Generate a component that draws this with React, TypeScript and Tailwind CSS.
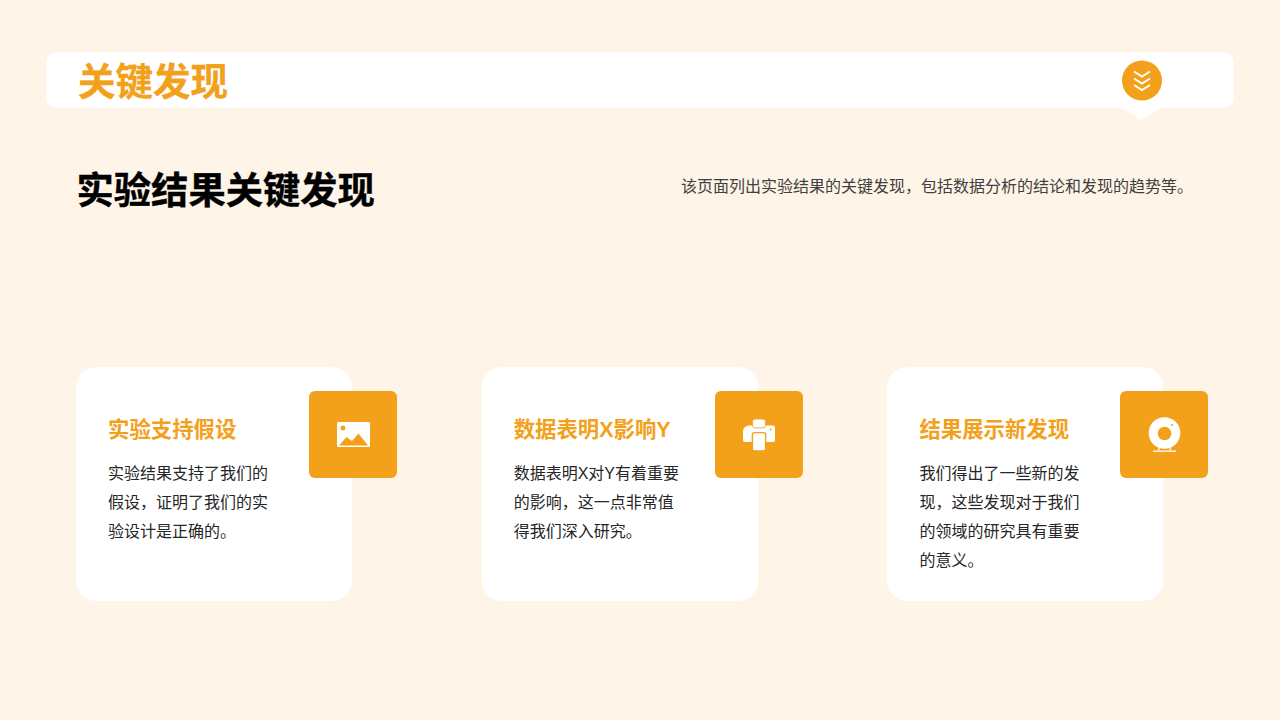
const font = '[font-family:"Liberation_Sans","Noto_Sans_CJK_SC",sans-serif]';

function ImageIcon() {
  return (
    <svg width="33" height="25" viewBox="0 0 33 25">
      <rect width="33" height="25" rx="1.5" fill="#fff" />
      <circle cx="6" cy="6" r="2.4" fill="#f3a01b" />
      <path d="M2 23.5 L9.5 15 L15 19 L21.5 11.5 L31 23.5 Z" fill="#f3a01b" />
    </svg>
  );
}

function PrinterIcon() {
  return (
    <svg width="32" height="32" viewBox="0 0 32 32">
      <path d="M6 6.5H30A2 2 0 0 1 32 8.5V21A2 2 0 0 1 30 23H2A2 2 0 0 1 0 21V12A6 6 0 0 1 6 6.5Z" fill="#fff" />
      <rect x="9.5" y="0" width="13" height="8.8" rx="2.5" fill="#fff" stroke="#f3a01b" strokeWidth="0.8" />
      <rect x="9.4" y="13.6" width="13.2" height="18.4" rx="2" fill="#fff" stroke="#f3a01b" strokeWidth="1.4" />
      <circle cx="27.5" cy="10.5" r="1" fill="#f3a01b" />
    </svg>
  );
}

function WebcamIcon() {
  return (
    <svg width="33" height="36" viewBox="0 0 33 36">
      <circle cx="16.5" cy="16" r="15.8" fill="#fff" />
      <circle cx="16.5" cy="16.5" r="6.8" fill="#f3a01b" />
      <circle cx="24" cy="8" r="1" fill="#f3a01b" />
      <path d="M11 30V33H9.5M22 30V33H23.5" stroke="#fff" strokeWidth="1.2" fill="none" />
      <rect x="5" y="33.5" width="23" height="1.3" fill="#fff" />
    </svg>
  );
}

function Card({ title, lines, icon }: { title: string; lines: string[]; icon: React.ReactNode }) {
  return (
    <div className="relative h-[234px] w-[276px] rounded-[20px] bg-white pl-[32px] pt-[48px]">
      <h3 className="text-[21.4px] leading-[30px] font-bold text-[#f3a01b]">{title}</h3>
      <div className="mt-[14px] text-[16px] leading-[29px] text-[#262626]">
        {lines.map((l) => (
          <p key={l} className="whitespace-nowrap">{l}</p>
        ))}
      </div>
      <div className="absolute left-[233px] top-[24px] flex h-[87px] w-[88px] items-center justify-center rounded-[6px] bg-[#f3a01b]">
        {icon}
      </div>
    </div>
  );
}

export default function App() {
  return (
    <div className={`flex h-[720px] w-[1280px] flex-col overflow-hidden bg-[#fef4e8] pt-[52px] ${font}`}>
      <header className="relative mx-[46px] flex h-[56px] items-center justify-between rounded-[10px] bg-white pl-[32px] pr-[72px]">
        <h1 className="pt-[3px] text-[37.5px] leading-[56px] font-bold text-[#f3a01b] [-webkit-text-stroke:0.3px_#f3a01b]">关键发现</h1>
        <div className="flex h-[40px] w-[40px] translate-y-[0.5px] items-center justify-center rounded-full bg-[#f3a01b]">
          <svg width="18" height="22" viewBox="0 0 18 22" fill="none" stroke="#fff" strokeWidth="2">
            <path d="M1 2 L9 7 L17 2" />
            <path d="M1 9 L9 14 L17 9" />
            <path d="M1 15.5 L9 20.5 L17 15.5" />
          </svg>
        </div>
        <svg className="absolute left-[1075px] top-[56px]" width="40" height="12" viewBox="0 0 40 12">
          <path d="M0 0H40L20 12Z" fill="#fff" />
        </svg>
      </header>

      <section className="mt-[57px] flex items-start justify-between pl-[76.5px] pr-[87px]">
        <h2 className="text-[37.3px] leading-[52px] font-bold text-black [-webkit-text-stroke:0.4px_#000]">实验结果关键发现</h2>
        <p className="mt-[9px] text-[16px] leading-[26px] text-[#404040]">该页面列出实验结果的关键发现，包括数据分析的结论和发现的趋势等。</p>
      </section>

      <section className="mt-[150px] flex gap-[129.7px] pl-[76px]">
        <Card title="实验支持假设" lines={["实验结果支持了我们的", "假设，证明了我们的实", "验设计是正确的。"]} icon={<ImageIcon />} />
        <Card title="数据表明X影响Y" lines={["数据表明X对Y有着重要", "的影响，这一点非常值", "得我们深入研究。"]} icon={<PrinterIcon />} />
        <Card title="结果展示新发现" lines={["我们得出了一些新的发", "现，这些发现对于我们", "的领域的研究具有重要", "的意义。"]} icon={<WebcamIcon />} />
      </section>
    </div>
  );
}
